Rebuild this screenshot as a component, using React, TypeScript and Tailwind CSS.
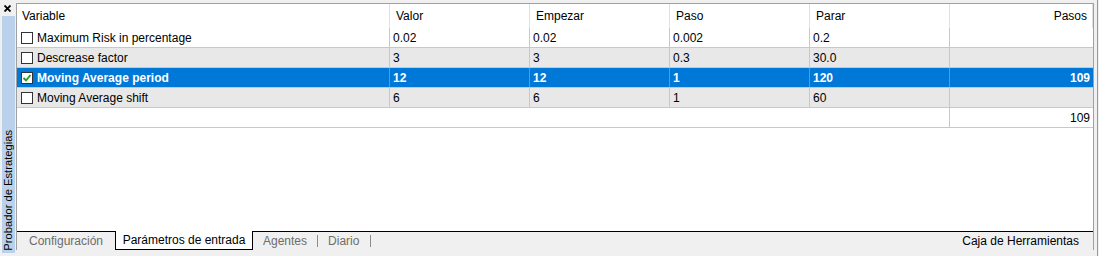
import React from 'react';

type Row = {
  name: string;
  values: string[];
  steps: string;
  checked?: boolean;
};

const rows: Row[] = [
  { name: 'Maximum Risk in percentage', values: ['0.02', '0.02', '0.002', '0.2'], steps: '' },
  { name: 'Descrease factor', values: ['3', '3', '0.3', '30.0'], steps: '' },
  { name: 'Moving Average period', values: ['12', '12', '1', '120'], steps: '109', checked: true },
  { name: 'Moving Average shift', values: ['6', '6', '1', '60'], steps: '' },
];

const headers = ['Valor', 'Empezar', 'Paso', 'Parar'];

function CheckBox({ checked }: { checked?: boolean }) {
  return (
    <div className="w-3 h-3 shrink-0 border border-[#333] bg-white flex items-center justify-center">
      {checked && (
        <svg width="10" height="10" viewBox="0 0 10 10">
          <path d="M1.5 5 L4 7.5 L8.5 2" fill="none" stroke="#1f9a1f" strokeWidth="1.8" />
        </svg>
      )}
    </div>
  );
}

export default function App() {
  return (
    <div className="w-[1099px] h-[256px] bg-[#f0f0f0] flex overflow-hidden text-[12px] text-black [font-family:'Segoe_UI','Liberation_Sans',sans-serif]">
      {/* side caption */}
      <div className="w-4 shrink-0 flex flex-col">
        <div className="h-4 pl-[4px] pt-[5px]">
          <svg width="7" height="7" viewBox="0 0 7 7">
            <path d="M0.5 0.5 L6.5 6.5 M6.5 0.5 L0.5 6.5" stroke="#000" strokeWidth="1.8" />
          </svg>
        </div>
        <div className="ml-[2px] w-[13px] h-[237px] bg-[#b9d1ea] flex flex-col justify-end items-center overflow-hidden">
          <span className="[writing-mode:vertical-rl] rotate-180 leading-[13px] whitespace-nowrap pt-[2px] text-[11.2px] text-black">
            Probador de Estrategias
          </span>
        </div>
      </div>

      {/* main panel */}
      <div className="mt-[3px] h-[247px] w-[1078px] shrink-0 border border-b-0 border-[#a0a0a0] bg-white flex flex-col">
        {/* header */}
        <div className="flex h-6 shrink-0">
          <div className="w-[373px] shrink-0 border-r border-[#e0e0e0] pl-[5px] flex items-center">Variable</div>
          {headers.map((h) => (
            <div key={h} className="w-[140px] shrink-0 border-r border-[#e0e0e0] pl-[6px] flex items-center">
              {h}
            </div>
          ))}
          <div className="flex-1 pr-[5px] flex items-center justify-end border-r border-[#e0e0e0]">Pasos</div>
        </div>

        {/* rows */}
        {rows.map((r, i) => {
          const bg = r.checked ? 'bg-[#0078d7] text-white font-bold' : i % 2 === 1 ? 'bg-[#e8e8e8]' : 'bg-white';
          const sep = r.checked ? 'border-[#4d9be0]' : 'border-[#c8c8c8]';
          return (
            <div key={r.name} className={`flex h-5 shrink-0 border-b border-[#c8c8c8] ${bg}`}>
              <div className={`w-[373px] shrink-0 border-r ${sep} pl-[4px] flex items-center gap-[4px]`}>
                <CheckBox checked={r.checked} />
                <span className="whitespace-nowrap">{r.name}</span>
              </div>
              {r.values.map((v, j) => (
                <div key={j} className={`w-[140px] shrink-0 border-r ${sep} pl-[3px] flex items-center`}>
                  {v}
                </div>
              ))}
              <div className="flex-1 pr-[3px] flex items-center justify-end">{r.steps}</div>
            </div>
          );
        })}

        {/* total */}
        <div className="flex h-5 shrink-0 border-b border-[#c8c8c8]">
          <div className="w-[933px] shrink-0 border-r border-[#c8c8c8]" />
          <div className="flex-1 pr-[3px] flex items-center justify-end">109</div>
        </div>

        <div className="flex-1" />

        {/* tabs */}
        <div className="h-[19px] shrink-0 border-t border-black bg-[#f0f0f0] flex items-stretch text-[#6d6d6d]">
          <div className="w-[98px] flex items-center justify-center">Configuración</div>
          <div className="-mt-px h-[19px] w-[138px] bg-white border-x border-b border-black flex items-center justify-center text-black">
            Parámetros de entrada
          </div>
          <div className="pl-[10px] flex items-center">Agentes</div>
          <div className="mx-[10px] w-px h-[12px] self-center bg-[#8c8c8c]" />
          <div className="flex items-center">Diario</div>
          <div className="ml-[11px] w-px h-[12px] self-center bg-[#8c8c8c]" />
          <div className="ml-auto pr-[14px] flex items-center text-black">Caja de Herramientas</div>
        </div>
      </div>

      {/* right frame */}
      <div className="w-[3px] shrink-0" />
      <div className="w-px shrink-0 bg-[#9a9a9a]" />
      <div className="w-px shrink-0" />
    </div>
  );
}
